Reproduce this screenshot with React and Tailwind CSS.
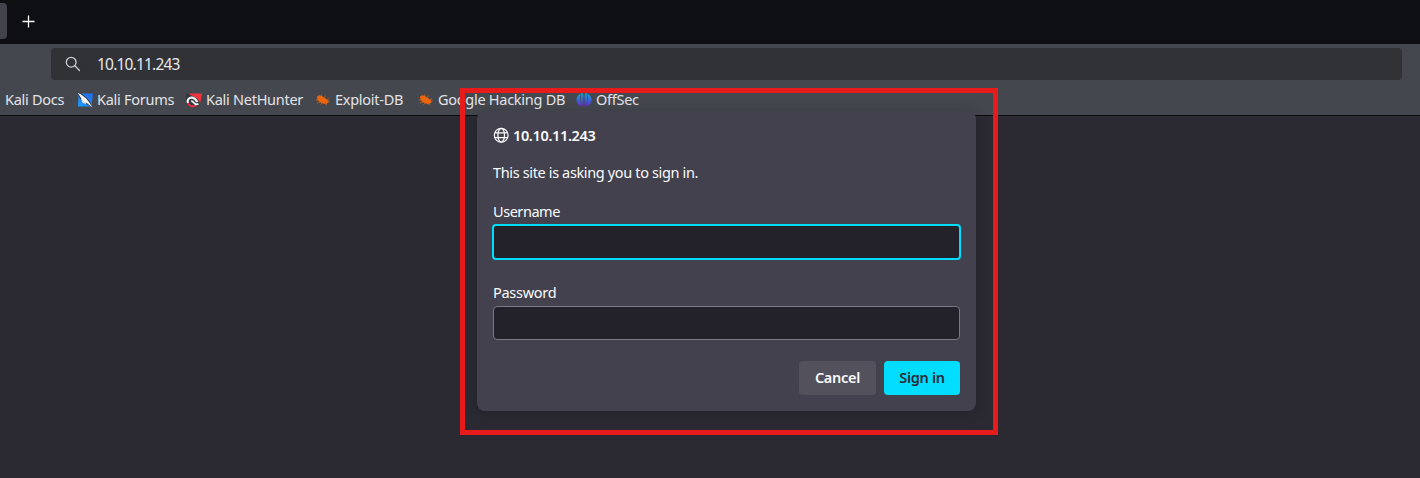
import React from "react";

function Plus() {
  return (
    <svg width="14" height="14" viewBox="0 0 14 14" stroke="#fbfbfe" strokeWidth="1.3" fill="none">
      <path d="M6.500 .5v12M.5 6.500h12" />
    </svg>
  );
}

function SearchIcon() {
  return (
    <svg width="16" height="16" viewBox="0 0 16 16" stroke="#cfcfd3" strokeWidth="1.3" fill="none" strokeLinecap="round">
      <circle cx="6.2" cy="6.2" r="4.9" />
      <path d="M9.8 9.8l4.7 4.7" />
    </svg>
  );
}

function ForumsIcon() {
  return (
    <svg width="16" height="16" viewBox="0 0 16 16">
      <defs>
        <linearGradient id="forum" x1="0" y1="1" x2="1" y2="0">
          <stop offset="0" stopColor="#1a9cff" />
          <stop offset="1" stopColor="#2468f0" />
        </linearGradient>
      </defs>
      <path d="M1.500 1.500H16L14.500 14.500H1z" fill="url(#forum)" />
      <path d="M0 .3l4.500 1.200 5 4 3 3.500 3.200 6.500-5.700-3.300-4.500-2L3 6.500z" fill="#28303c" />
      <path d="M.6.800L3.800 2.300l5.200 4 3 3.800 3.500 5.400-5.500-4.200-3.500-1.300-2.700-4.300z" fill="#f5f5f5" />
      <path d="M4.500 7l1.500 3.300 3 1.200" stroke="#e6f0f8" strokeWidth="1.200" fill="none" />
    </svg>
  );
}

function NetHunterIcon() {
  return (
    <svg width="16" height="16" viewBox="0 0 16 16">
      <path d="M0 1.500l6 .5L12 6l2 5.500-3 3.500H3L0 11z" fill="#343740" />
      <path d="M3.500 1.500H16L14 12C13.200 7.500 9.500 4.200 3.500 2.700z" fill="#f5333e" />
      <path d="M2 11C.8 7.500 3.200 5.300 6.300 5.700c2.500.3 3.700 2 5 4.300" fill="none" stroke="#f5f5f5" strokeWidth="2.200" />
      <path d="M1.800 11c1.200 3.300 5 4 8.700 2.500" fill="none" stroke="#ee2f43" strokeWidth="1.800" />
      <path d="M5.200 9.300c1.500-.3 2.300 1 3.300 2.200 1.200 1 2.800 1 4 .2" fill="none" stroke="#f5f5f5" strokeWidth="1.800" />
    </svg>
  );
}

function BugIcon() {
  return (
    <svg width="16" height="16" viewBox="0 0 16 16">
      <path d="M2.300 4.200L4 3.300l2.200.5 2.100 1.200 2.200 1.200 1.500 1.600 1.300 1.300.3 1.400-1 .6-1.300.8-2.500-.2-2.500-.7-2.400-1.500-1.500-1.900L2 5.300z" fill="#ed650d" />
      <path d="M.8 8l3 .2M1.800 11.300l3.200-1.300M5.500 12.500L7.500 11M6.300 3.900l.5-1.500M9.300 5.300l1-1.800M12 7.600l2-1M10 11.500l2 1.500M13 9.300l1.800-.6" stroke="#c75d1b" strokeWidth=".9" />
    </svg>
  );
}

function OffSecIcon() {
  return (
    <svg width="16" height="16" viewBox="0 0 16 16">
      <defs>
        <linearGradient id="offsec" gradientUnits="userSpaceOnUse" x1="0" y1="1" x2="0" y2="15">
          <stop offset="0" stopColor="#12a9cf" />
          <stop offset=".5" stopColor="#3c68dc" />
          <stop offset="1" stopColor="#6a22d8" />
        </linearGradient>
      </defs>
      <g fill="url(#offsec)">
        <path d="M4.600 1.500C2 2.800.5 5 .5 7.800S2 13 5.300 14.500C4.300 10 4 5.500 4.600 1.500z" />
        <path d="M6.900 1H5.300C4.700 5 4.900 9.500 5.700 14.500l.9-1z" />
        <path d="M7.550 2.500h.9V15h-.9z" />
        <path d="M9.100 1h1.600c.6 4 .4 8.500-.4 13.500l-.9-1z" />
        <path d="M11.400 1.500C14 2.800 15.500 5 15.500 7.800S14 13 10.700 14.500c1-4.500 1.300-9 .7-13z" />
      </g>
    </svg>
  );
}

function Globe() {
  return (
    <svg width="16" height="16" viewBox="0 0 16 16" fill="none" stroke="#fbfbfe" strokeWidth="1.250">
      <circle cx="8.200" cy="8.200" r="6.900" />
      <ellipse cx="8.200" cy="8.200" rx="3.300" ry="6.900" />
      <path d="M1.700 5.900h13M1.700 10.500h13" />
    </svg>
  );
}

function Bookmark({ icon, label, width }) {
  return (
    <div className={`flex shrink-0 items-center ${width}`}>
      {icon}
      <span className="ml-1 -mt-px">{label}</span>
    </div>
  );
}

export default function App() {
  return (
    <div className="relative flex h-[478px] w-[1420px] flex-col overflow-hidden whitespace-nowrap bg-[#2b2a33] font-['Noto_Sans',sans-serif] text-[14.5px] tracking-[-0.27px] text-[#fbfbfe]">
      <div className="flex h-11 items-start bg-[#0e0f13]">
        <div className="mt-[3px] h-9 w-[7px] rounded-r bg-[#42444c]" />
        <div className="mt-[15px] ml-[15px]"><Plus /></div>
      </div>
      <div className="flex h-[72px] flex-col border-b border-[#0c0c0d] bg-[#44474e]">
        <div className="mt-1 mr-[18px] ml-[51px] flex h-8 shrink-0 items-center rounded bg-[#313236] pl-[14px]">
          <SearchIcon />
          <span className="ml-4 pt-0.5 text-[15.5px] tracking-[-0.8px] text-[#e8e8ea]">10.10.11.243</span>
        </div>
        <div className="flex h-[35px] items-center pt-[5px] pl-[5px] text-[#e3e3e6]">
          <span className="-mt-px w-[72px] shrink-0">Kali Docs</span>
          <Bookmark icon={<ForumsIcon />} label="Kali Forums" width="w-[109px]" />
          <Bookmark icon={<NetHunterIcon />} label="Kali NetHunter" width="w-[129px]" />
          <Bookmark icon={<BugIcon />} label="Exploit-DB" width="w-[103px]" />
          <Bookmark icon={<BugIcon />} label="Google Hacking DB" width="w-[158px]" />
          <Bookmark icon={<OffSecIcon />} label="OffSec" width="w-[70px]" />
        </div>
      </div>

      <div className="absolute top-[111px] left-[477px] flex h-[300px] w-[499px] flex-col rounded-lg bg-[#42414d] px-4 pt-4 pb-4 shadow-[0_2px_14px_rgba(0,0,0,0.2)]">
        <div className="flex h-4 items-center gap-1 font-semibold">
          <Globe />
          <span className="pt-0.5 tracking-[-0.36px]">10.10.11.243</span>
        </div>
        <p className="mt-[19px] h-5 leading-5 tracking-[-0.36px]">This site is asking you to sign in.</p>
        <label className="mt-[19px] h-5 leading-5 tracking-[-0.45px]">Username</label>
        <div className="-mx-px mt-[3px] h-9 shrink-0 rounded border-2 border-[#00ddff] bg-[#23222b]" />
        <label className="mt-[22px] h-5 leading-5">Password</label>
        <div className="mt-[4px] h-[34px] shrink-0 rounded border border-[#7b7a83] bg-[#23222b]" />
        <div className="mt-[21px] flex justify-end gap-2 font-semibold">
          <button className="h-[34px] w-[77px] rounded bg-[#52515c]">Cancel</button>
          <button className="h-[34px] w-[76px] rounded bg-[#00ddff] text-[#2b2a33]">Sign in</button>
        </div>
      </div>
      <div className="absolute top-[88px] left-[460px] h-[347px] w-[538px] border-5 border-[#e81b1c]" />
    </div>
  );
}
